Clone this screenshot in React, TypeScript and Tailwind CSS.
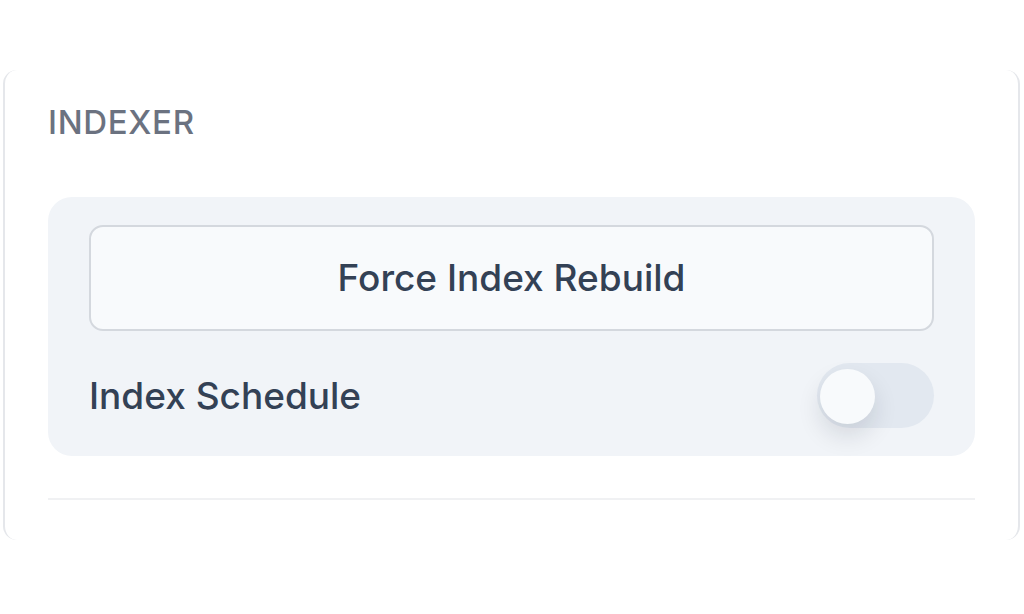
import React from "react";

export default function App() {
  return (
    <div className="w-[1024px] h-[614px] bg-white pt-[70px] pl-[3px]" style={{ fontFamily: "Inter, 'Noto Sans', sans-serif" }}>
      <div className="w-[1017px] h-[470px] border-x-2 border-[#e5e7eb] rounded-[14px] pl-[43px] pt-[36px]">
        <div className="text-[33px] leading-[33px] font-medium tracking-[0.02em] text-[#6b7280]">INDEXER</div>
        <div className="mt-[58px] w-[927px] bg-[#f1f4f8] rounded-[24px] px-[41px] pt-[28px] pb-[28px]">
          <button className="w-full h-[106px] border-2 border-[#d4d8de] rounded-[14px] bg-[#f8fafc] text-[37px] font-medium text-[#334155]">
            Force Index Rebuild
          </button>
          <div className="mt-[32px] flex items-center justify-between">
            <span className="text-[37px] font-medium text-[#334155]">Index Schedule</span>
            <div className="relative w-[117px] h-[65px] rounded-full bg-[#e2e8f0]">
              <div className="absolute left-[3px] top-[6px] w-[55px] h-[55px] rounded-full bg-[#f8fafc] shadow-[0_12px_24px_rgba(15,23,42,0.12)]" />
            </div>
          </div>
        </div>
        <div className="mt-[42px] w-[927px] h-[2px] bg-[#f0f1f3]" />
      </div>
    </div>
  );
}
